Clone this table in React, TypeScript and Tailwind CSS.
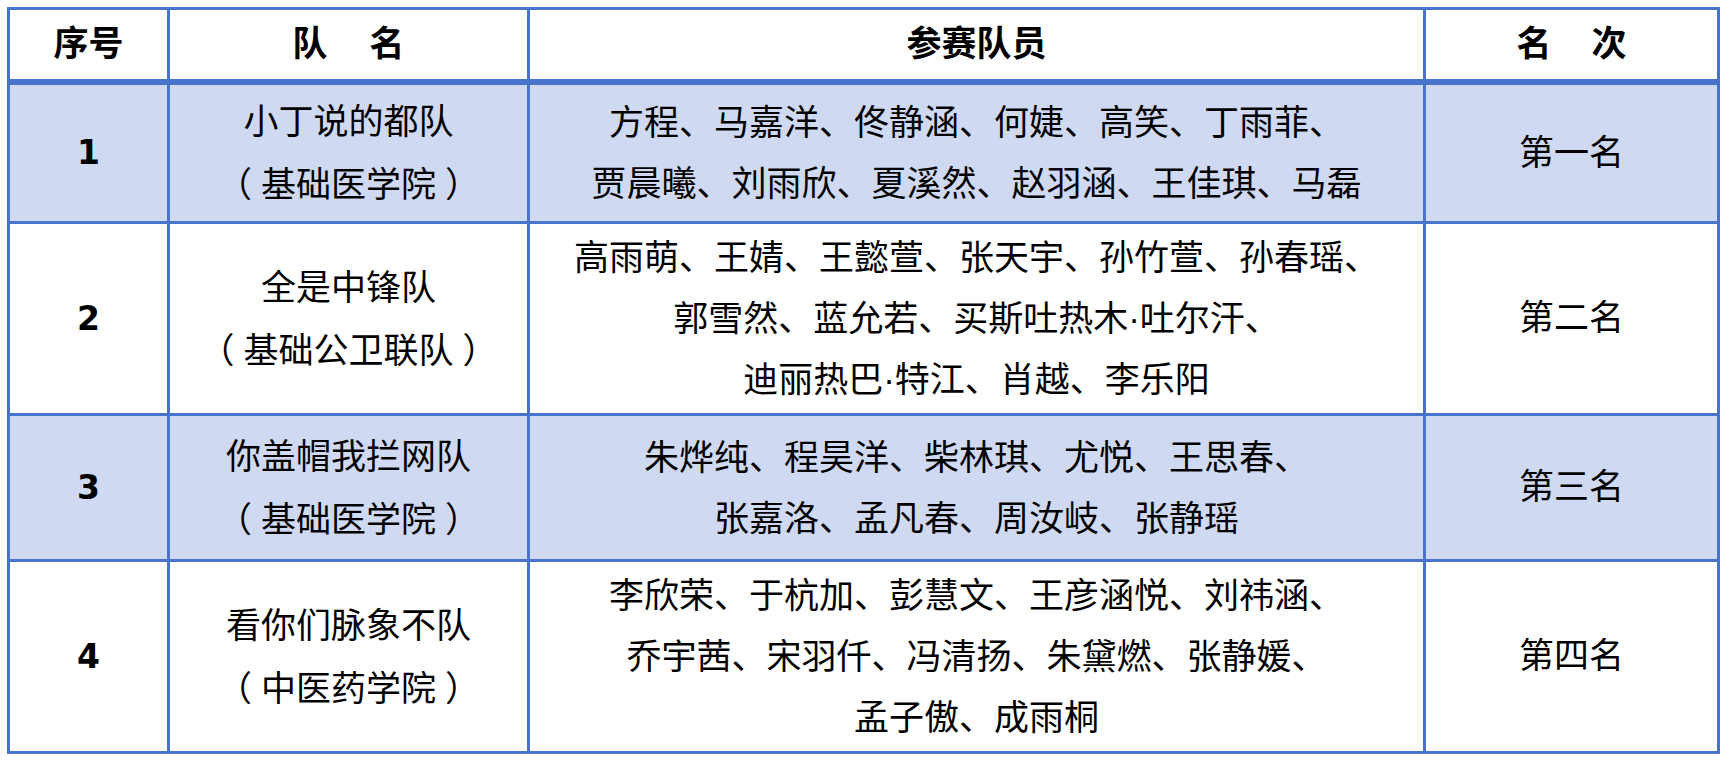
import React from 'react';

interface Team {
  no: string;
  name: string;
  school: string;
  members: string[];
  rank: string;
  height: string;
  shaded: boolean;
}

const teams: Team[] = [
  {
    no: '1',
    name: '小丁说的都队',
    school: '基础医学院',
    members: ['方程、马嘉洋、佟静涵、何婕、高笑、丁雨菲、', '贾晨曦、刘雨欣、夏溪然、赵羽涵、王佳琪、马磊'],
    rank: '第一名',
    height: 'h-[136px]',
    shaded: true,
  },
  {
    no: '2',
    name: '全是中锋队',
    school: '基础公卫联队',
    members: ['高雨萌、王婧、王懿萱、张天宇、孙竹萱、孙春瑶、', '郭雪然、蓝允若、买斯吐热木·吐尔汗、', '迪丽热巴·特江、肖越、李乐阳'],
    rank: '第二名',
    height: 'h-[192px]',
    shaded: false,
  },
  {
    no: '3',
    name: '你盖帽我拦网队',
    school: '基础医学院',
    members: ['朱烨纯、程昊洋、柴林琪、尤悦、王思春、', '张嘉洛、孟凡春、周汝岐、张静瑶'],
    rank: '第三名',
    height: 'h-[146px]',
    shaded: true,
  },
  {
    no: '4',
    name: '看你们脉象不队',
    school: '中医药学院',
    members: ['李欣荣、于杭加、彭慧文、王彦涵悦、刘祎涵、', '乔宇茜、宋羽仟、冯清扬、朱黛燃、张静媛、', '孟子傲、成雨桐'],
    rank: '第四名',
    height: 'h-[192px]',
    shaded: false,
  },
];

const cols = 'grid grid-cols-[157px_360px_896px_294px]';
const cell = 'flex flex-col items-center justify-center text-center';
const divider = 'border-l-[3px] border-[#4874cb]';

export default function App() {
  return (
    <div className="min-h-screen bg-white pt-[7px] pl-[7px] text-black [font-family:'Liberation_Sans','Noto_Sans_CJK_SC',sans-serif]">
      <div className="w-[1713px] border-[3px] border-[#4874cb] text-[35px]">
        {/* header */}
        <div className={`${cols} h-[75px] border-b-[6px] border-[#4874cb] font-bold`}>
          <div className={cell}>序号</div>
          <div className={`${cell} ${divider} flex-row gap-[42px]`}>
            <span>队</span>
            <span>名</span>
          </div>
          <div className={`${cell} ${divider}`}>参赛队员</div>
          <div className={`${cell} ${divider} flex-row gap-[40px]`}>
            <span>名</span>
            <span>次</span>
          </div>
        </div>

        {teams.map((t, i) => (
          <div
            key={t.no}
            className={`${cols} ${t.height} ${i > 0 ? 'border-t-[3px] border-[#4874cb]' : ''} ${t.shaded ? 'bg-[#cfdaf2]' : 'bg-white'}`}
          >
            <div className={`${cell} font-bold text-[33px] [font-family:'DejaVu_Sans',sans-serif]`}>{t.no}</div>
            <div className={`${cell} ${divider} leading-[63px]`}>
              <div>{t.name}</div>
              <div className="flex">
                <span>（</span>
                <span className="px-[9px]">{t.school}</span>
                <span>）</span>
              </div>
            </div>
            <div className={`${cell} ${divider} leading-[61px]`}>
              {t.members.map((line) => (
                <div key={line}>{line}</div>
              ))}
            </div>
            <div className={`${cell} ${divider}`}>{t.rank}</div>
          </div>
        ))}
      </div>
    </div>
  );
}
